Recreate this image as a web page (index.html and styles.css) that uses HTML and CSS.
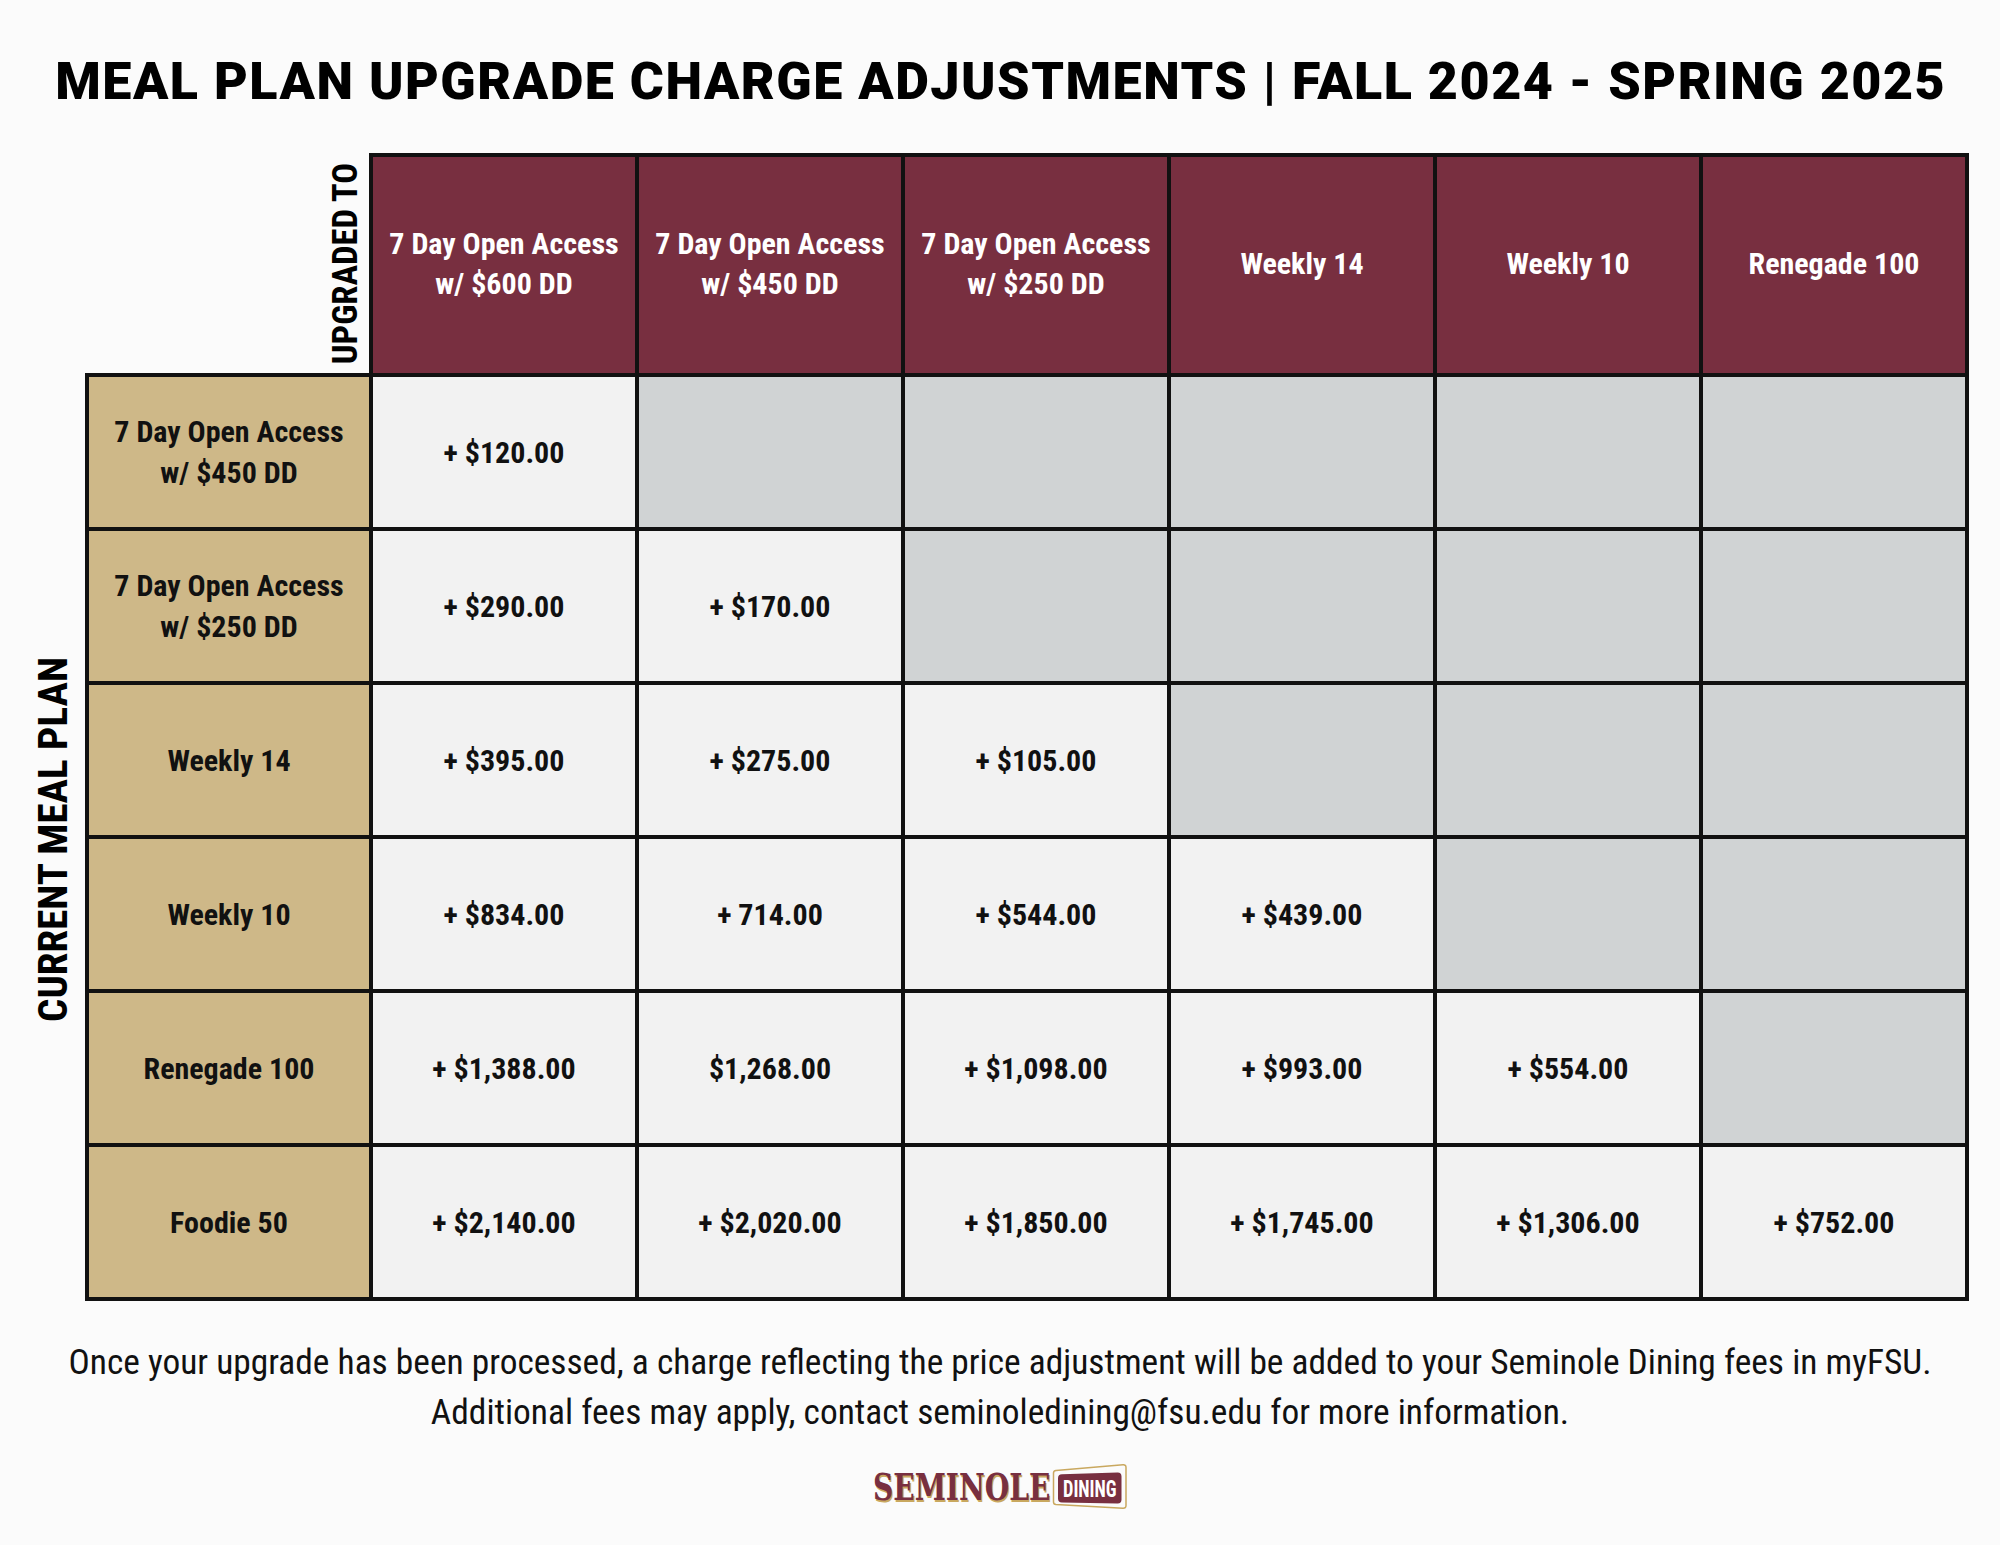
FILE: index.html
```html
<!DOCTYPE html>
<html lang="en">
<head>
<meta charset="utf-8">
<title>Meal Plan Upgrade Charge Adjustments | Fall 2024 - Spring 2025</title>
<link rel="stylesheet" href="styles.css">
</head>
<body>
<main class="page">
  <h1 class="title">MEAL PLAN UPGRADE CHARGE ADJUSTMENTS | FALL 2024 - SPRING 2025</h1>

  <section class="matrix">
    <div class="side-label"><span class="vtext vtext-lg">CURRENT MEAL PLAN</span></div>
    <div class="grid">
      <div class="corner"><span class="vtext vtext-md">UPGRADED TO</span></div>
      <div class="cell head">7 Day Open Access<br>w/ $600 DD</div>
      <div class="cell head">7 Day Open Access<br>w/ $450 DD</div>
      <div class="cell head">7 Day Open Access<br>w/ $250 DD</div>
      <div class="cell head">Weekly 14</div>
      <div class="cell head">Weekly 10</div>
      <div class="cell head">Renegade 100</div>

      <div class="cell plan">7 Day Open Access<br>w/ $450 DD</div>
      <div class="cell price">+ $120.00</div>
      <div class="cell na"></div>
      <div class="cell na"></div>
      <div class="cell na"></div>
      <div class="cell na"></div>
      <div class="cell na"></div>

      <div class="cell plan">7 Day Open Access<br>w/ $250 DD</div>
      <div class="cell price">+ $290.00</div>
      <div class="cell price">+ $170.00</div>
      <div class="cell na"></div>
      <div class="cell na"></div>
      <div class="cell na"></div>
      <div class="cell na"></div>

      <div class="cell plan">Weekly 14</div>
      <div class="cell price">+ $395.00</div>
      <div class="cell price">+ $275.00</div>
      <div class="cell price">+ $105.00</div>
      <div class="cell na"></div>
      <div class="cell na"></div>
      <div class="cell na"></div>

      <div class="cell plan">Weekly 10</div>
      <div class="cell price">+ $834.00</div>
      <div class="cell price">+ 714.00</div>
      <div class="cell price">+ $544.00</div>
      <div class="cell price">+ $439.00</div>
      <div class="cell na"></div>
      <div class="cell na"></div>

      <div class="cell plan">Renegade 100</div>
      <div class="cell price">+ $1,388.00</div>
      <div class="cell price">$1,268.00</div>
      <div class="cell price">+ $1,098.00</div>
      <div class="cell price">+ $993.00</div>
      <div class="cell price">+ $554.00</div>
      <div class="cell na"></div>

      <div class="cell plan">Foodie 50</div>
      <div class="cell price">+ $2,140.00</div>
      <div class="cell price">+ $2,020.00</div>
      <div class="cell price">+ $1,850.00</div>
      <div class="cell price">+ $1,745.00</div>
      <div class="cell price">+ $1,306.00</div>
      <div class="cell price">+ $752.00</div>
    </div>
  </section>

  <p class="note">Once your upgrade has been processed, a charge reflecting the price adjustment will be added to your Seminole Dining fees in myFSU.<br>Additional fees may apply, contact seminoledining@fsu.edu for more information.</p>

  <div class="logo" aria-label="Seminole Dining">
    <div class="logo-word-box"><span class="logo-word">SEMINOLE</span></div>
    <svg class="logo-badge-svg" width="76" height="46" viewBox="178 0 76 46">
      <path class="logo-frame" d="M183 6.5 L250 0.8 Q253 0.6 253 3.5 L253 41.5 Q253 44.3 250 44.2 L183 40.6 Q180.5 40.4 180.5 38 L180.5 9 Q180.5 6.7 183 6.5 Z"/>
      <path class="logo-badge" d="M189 10.2 L244.5 8.6 Q248.5 8.5 248.5 12.5 L248.5 35.8 Q248.5 39.6 244.5 39.5 L189 38.6 Q185 38.5 185 34.6 L185 14.2 Q185 10.3 189 10.2 Z"/>
      <text class="logo-dining" transform="translate(216.8 33) scale(0.8 1)" text-anchor="middle">DINING</text>
    </svg>
  </div>
</main>
</body>
</html>
```

FILE: styles.css
```css
* {
  box-sizing: border-box;
}

html,
body {
  margin: 0;
  padding: 0;
}

body {
  width: 2000px;
  min-height: 1545px;
  background: #fbfbfb;
  color: #111;
  font-family: "Roboto Condensed", "Roboto", "Liberation Sans", sans-serif;
  font-stretch: 75%;
}

.page {
  display: flex;
  flex-direction: column;
  align-items: center;
  padding-top: 51px;
}

.title {
  margin: 0;
  font-family: "Roboto", "Liberation Sans", sans-serif;
  font-stretch: 100%;
  font-size: 52px;
  line-height: 62px;
  font-weight: 900;
  letter-spacing: 1.5px;
  padding-left: 1.5px;
  color: #000;
  white-space: nowrap;
}

.matrix {
  align-self: flex-start;
  display: flex;
  margin-top: 40px;
}

.side-label {
  width: 85px;
  padding-top: 224px;
  padding-left: 33px;
  display: flex;
  align-items: center;
}

.vtext {
  writing-mode: vertical-rl;
  transform: rotate(180deg);
  white-space: nowrap;
  font-weight: 700;
  color: #000;
}

.vtext-lg {
  font-size: 41px;
  line-height: 41px;
}

.vtext-md {
  font-size: 34.5px;
  line-height: 34.5px;
}

.grid {
  display: grid;
  grid-template-columns: 280px repeat(6, 262px);
  grid-template-rows: 216px repeat(6, 150px);
  gap: 4px;
  padding: 4px;
  background: #111;
}

.corner {
  margin: -4px 0 0 -4px;
  background: #fbfbfb;
  display: flex;
  justify-content: flex-end;
  align-items: flex-end;
  padding: 0 7px 9px 0;
}

.cell {
  display: flex;
  align-items: center;
  justify-content: center;
  text-align: center;
  font-size: 30px;
  line-height: 41px;
  font-weight: 700;
}

.head {
  background: #782f40;
  color: #fff;
  line-height: 40px;
  padding-bottom: 3px;
}

.plan {
  background: #ceb888;
  color: #111;
}

.price {
  background: #f2f2f2;
  color: #111;
}

.na {
  background: #d0d3d4;
}

.note {
  margin: 36px 0 0;
  font-size: 35.4px;
  line-height: 50px;
  font-weight: 400;
  text-align: center;
  color: #111;
}

.logo {
  margin-top: 27px;
  display: flex;
  align-items: flex-start;
  gap: 6px;
}

.logo-word-box {
  width: 172px;
  height: 46px;
  white-space: nowrap;
}

.logo-word {
  display: inline-block;
  font-family: "DejaVu Serif", "Liberation Serif", serif;
  font-stretch: 100%;
  font-weight: 700;
  font-size: 38px;
  line-height: 46px;
  color: #782f40;
  text-shadow: 1.5px 1.5px 0 #c9a85f;
  transform: scaleX(0.74);
  transform-origin: left center;
}

.logo-badge-svg {
  display: block;
  flex: none;
}

.logo-frame {
  fill: none;
  stroke: #c9a85f;
  stroke-width: 1.5;
}

.logo-badge {
  fill: #782f40;
}

.logo-dining {
  font-family: "Roboto Condensed", "Roboto", sans-serif;
  font-stretch: 75%;
  font-weight: 700;
  font-size: 23px;
  fill: #fff;
}
```
